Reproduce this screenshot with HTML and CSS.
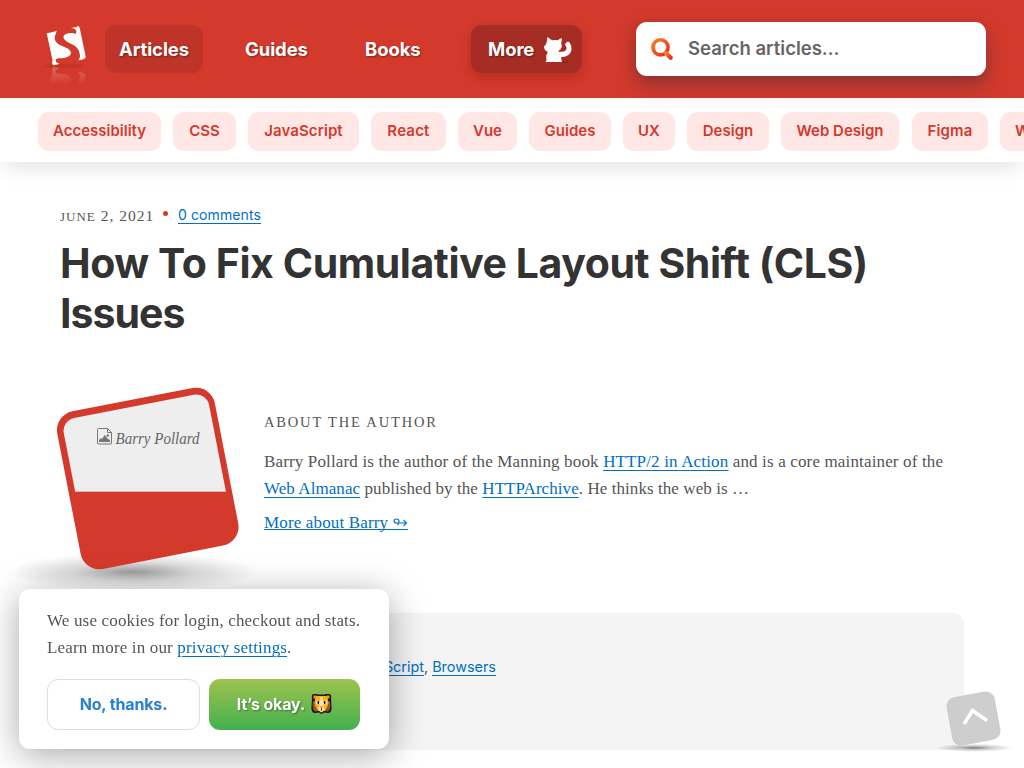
FILE: index.html
```html
<!DOCTYPE html>
<html lang="en">
<head>
<meta charset="utf-8">
<title>How To Fix Cumulative Layout Shift (CLS) Issues</title>
<link rel="stylesheet" href="styles.css">
</head>
<body>
<header class="header">
  <a class="logo" href="#">
    <svg width="46" height="64" viewBox="0 0 46 64">
      <defs>
        <linearGradient id="fade" x1="0" y1="1" x2="0" y2="0"><stop offset="0" stop-color="#fff" stop-opacity=".24"/><stop offset=".45" stop-color="#fff" stop-opacity="0"/></linearGradient>
        <path id="mark" d="M3.700 11.200Q9 10.500 13.700 8.700L12.700 12Q10 17 14 21C18 25 24 24.500 27 28.500C30 33 25 36.500 15.300 36.300Q11.500 37 13 40L16.500 42 10.500 43.300Q8.500 42 9.500 38ZM27.700 5.800Q33 6 35.300 4Q36.500 4.500 37 7.300L42.700 34.700Q43 37.500 35 38.200Q38 36 36.500 31C35 24 29 22.500 24.500 20C19.500 17 18.500 12.500 25.300 11.200Q30 10.300 32.700 12Q35.500 7 27.700 5.800Z"/>
      </defs>
      <ellipse cx="20" cy="44" rx="20" ry="2.500" fill="#a8291f" opacity=".3"/>
      <use href="#mark" fill="#fff"/>
      <use href="#mark" fill="url(#fade)" transform="translate(0 88) scale(1 -1)"/>
    </svg>
  </a>
  <nav class="menu">
    <a class="menu-link menu-articles" href="#"><span>Articles</span></a>
    <a class="menu-link menu-guides" href="#"><span>Guides</span></a>
    <a class="menu-link menu-books" href="#"><span>Books</span></a>
    <a class="menu-link menu-more" href="#"><span>More</span>
      <svg width="30" height="27" viewBox="0 0 30 27"><path fill="#fff" d="M4.500 1 9 4.300Q12 3.600 14.500 4.300L18.800 2 18.300 8Q20 12 15.500 15Q18.500 18 18.300 23L19 26H2.500L3.700 24Q2 20 5 16Q1 14.500 1 10.500 3.700 8.500 3.700 6Z"/><path d="M17.500 18.300Q24.500 19 26 13.500Q26.500 11 24.800 8.500" fill="none" stroke="#fff" stroke-width="5" stroke-linecap="round"/><path d="M19 26h7" stroke="#6e1d17" stroke-width=".6"/></svg>
    </a>
  </nav>
  <div class="search">
    <svg width="24" height="24" viewBox="0 0 24 24"><defs><linearGradient id="heat" x1="0" y1="0" x2="1" y2="1"><stop stop-color="#ff7b24"/><stop offset="1" stop-color="#e92c24"/></linearGradient></defs><g fill="none" stroke="url(#heat)"><circle cx="10.500" cy="10.300" r="7.600" stroke-width="3.600"/><path d="m16.200 16.200 4.500 4.500" stroke-width="4.200" stroke-linecap="round"/></g></svg>
    <span class="placeholder">Search articles…</span>
  </div>
</header>
<nav class="topics"><div class="chips">
  <a class="chip" href="#">Accessibility</a><a class="chip" href="#">CSS</a><a class="chip" href="#">JavaScript</a><a class="chip" href="#">React</a><a class="chip" href="#">Vue</a><a class="chip" href="#">Guides</a><a class="chip" href="#">UX</a><a class="chip" href="#">Design</a><a class="chip" href="#">Web Design</a><a class="chip" href="#">Figma</a><a class="chip" href="#">Wallpapers</a>
</div></nav>
<main class="article">
  <div class="meta"><time class="date"><small>JUNE</small> 2, 2021</time><i class="dot"></i><a class="comments" href="#">0 comments</a></div>
  <h1 class="title"><span class="title-first">How To Fix Cumulative Layout Shift (CLS)</span><br><span class="title-last">Issues</span></h1>
  <section class="author">
    <svg class="portrait" width="300" height="230" viewBox="0 370 300 230">
      <defs><radialGradient id="shade"><stop stop-color="#000" stop-opacity=".38"/><stop offset=".5" stop-color="#000" stop-opacity=".13"/><stop offset="1" stop-color="#000" stop-opacity="0"/></radialGradient><clipPath id="upper"><path d="M0 370h300v121.500H0z"/></clipPath></defs>
      <ellipse cx="133" cy="572" rx="125" ry="19" fill="url(#shade)"/>
      <rect x="67.500" y="398.200" width="160.500" height="160.500" rx="19" fill="#d33a2c" transform="rotate(-11 147.800 478.500)"/>
      <g clip-path="url(#upper)"><rect x="74" y="405" width="148" height="148" rx="13" fill="#eee" transform="rotate(-11 147.800 478.500)"/></g>
      <path d="M75 491.500h151" stroke="#ddd" stroke-width=".7" opacity=".6"/>
      <g fill="none" stroke="#777"><path d="M97.500 429.500q0-1 1-1h9l4 4v10.500q0 1-1 1h-12q-1 0-1-1z"/><path d="M107.500 428.500v4h4"/></g>
      <path d="M99 442v-2l2-2 1 1 2.500-4 3.500 4 2 1v2z" fill="#777"/><circle cx="107.800" cy="435.500" r="1.300" fill="#777"/>
      <text class="alt" x="115.500" y="444" textLength="84" lengthAdjust="spacingAndGlyphs">Barry Pollard</text>
    </svg>
    <div class="bio">
      <h2 class="about">ABOUT THE AUTHOR</h2>
      <p class="line line-one">Barry Pollard is the author of the Manning book <a href="#">HTTP/2 in Action</a> and is a core maintainer of the</p>
      <p class="line line-two"><a href="#">Web Almanac</a> published by the <a href="#">HTTPArchive</a>. He thinks the web is …</p>
      <p class="line line-more"><a href="#">More about Barry <svg width="15" height="10" viewBox="0 0 15 10"><path d="M13.500 5H4Q1 5 1 3T3.500 1 6 3.500 4.500 7M10.500 2l3 3-3 3" fill="none" stroke="currentColor" stroke-width="1.100"/></svg></a></p>
    </div>
  </section>
  <aside class="tags"><a class="tag-script" href="#">JavaScript</a><span>, </span><a class="tag-browsers" href="#">Browsers</a></aside>
</main>
<div class="cookies">
  <p class="cookie-text"><span class="cookie-first">We use cookies for login, checkout and stats.</span><br><span class="cookie-last">Learn more in our <a href="#">privacy settings</a>.</span></p>
  <div class="buttons">
    <button class="button decline"><span>No, thanks.</span></button>
    <button class="button accept"><span>It’s okay.</span>
      <svg width="21" height="20" viewBox="0 0 21 20"><path d="M3 0Q0 0 1 4L.5 13Q0 19 4 19L8 18.500 10.500 20 13 18.500 17 19Q21 19 20.500 13L20 4Q21 0 18 0 15-.5 14 .5H7Q5-.5 3 0Z" fill="#171717"/><path d="M2 7Q1 16 4 17.500L8 17 5 8ZM19 7Q20 16 17 17.500L13 17 16 8Z" fill="#93582b"/><path d="M4.500 2H16.500L17.500 9Q16 15 13 17H8Q5 15 3.500 9Z" fill="#fdaf15"/><path d="M2.500 1.500h3v3h-3zM15.500 1.500h3v3h-3z" fill="#f99817"/><path d="M9.500 3h2l1 8 1.500 5-3.500 2.500L7 16l1.500-5Z" fill="#ffe4a0"/><path d="M8.500 12.500h4l-2 2z" fill="#ef6b38"/><circle cx="7" cy="8.500" r="1.900" fill="#fff"/><circle cx="14" cy="8.500" r="1.900" fill="#fff"/><ellipse cx="7.300" cy="8.500" rx=".9" ry="1.700"/><ellipse cx="13.700" cy="8.500" rx=".9" ry="1.700"/><path d="M10.500 14.500v2" stroke="#171717"/></svg>
    </button>
  </div>
</div>
<a class="to-top" href="#">
  <svg width="90" height="70" viewBox="0 0 90 70"><defs><radialGradient id="floor"><stop stop-color="#000" stop-opacity=".5"/><stop offset=".5" stop-color="#000" stop-opacity=".18"/><stop offset="1" stop-color="#000" stop-opacity="0"/></radialGradient></defs><ellipse cx="44" cy="62.800" rx="38" ry="4" fill="url(#floor)"/><rect x="19" y="9" width="49" height="49" rx="9" fill="#c5c5c5" fill-opacity=".84" transform="rotate(-10.500 43.500 33.500)"/><path d="m34 39 8.500-13.500L57 35.500" fill="none" stroke="#fff" stroke-width="3.600"/></svg>
</a>
</body>
</html>
```
FILE: styles.css
```css
* { box-sizing: border-box; }
html, body { height: 100%; overflow: hidden; }
body { margin: 0; background: #fff; color: #555; font-family: "Liberation Serif", serif; }
a { color: #006fc6; text-decoration: none; }
p, h1, h2 { margin: 0; }
svg { display: block; flex: none; }
.header { position: relative; z-index: 1; display: flex; align-items: flex-start; height: 98px; background: #d33a2c; font-family: Inter, "Liberation Sans", sans-serif; }
.logo { padding: 22px 0 0 43px; width: 105px; }
.menu { display: flex; padding-top: 25px; width: 531px; }
.menu-link { display: flex; align-items: center; height: 48px; border-radius: 11px; color: #fff; font-weight: 700; font-size: 18.500px; white-space: nowrap; letter-spacing: -.1px; text-shadow: 1px 1px 2px rgba(0,0,0,.4); }
.menu-articles { width: 98px; padding-left: 14px; background: #be3428; }
.menu-guides { margin-left: 42px; width: 65px; }
.menu-books { margin-left: 55px; width: 58px; }
.menu-more { margin-left: 48px; width: 111px; padding-left: 17px; gap: 9px; background: #a52d23; box-shadow: 0 5px 12px rgba(100,10,5,.23); }
.search { display: flex; align-items: center; gap: 14px; width: 350px; height: 54px; margin-top: 22px; padding-left: 14px; border-radius: 11px; background: #fff; box-shadow: 0 10px 20px rgba(75,45,60,.38), 0 3px 8px rgba(75,45,60,.24); }
.placeholder { padding-bottom: 2px; color: #666; font-weight: 600; font-size: 18.500px; letter-spacing: 0; white-space: nowrap; }
.topics { height: 64px; box-shadow: 0 12px 20px -5px rgba(0,0,0,.1); }
.chips { display: flex; gap: 12px; padding: 14px 0 0 38px; overflow: hidden; white-space: nowrap; }
.chip { display: flex; flex: none; justify-content: center; height: 39px; border-radius: 11px; background: #ffe7e6; color: #d33a2c; font: 600 15px/37px Inter, "Liberation Sans", sans-serif; }
.chip:nth-child(1) { width: 123px; }
.chip:nth-child(2) { width: 63px; }
.chip:nth-child(3) { width: 111px; letter-spacing: .1px; }
.chip:nth-child(4) { width: 75px; letter-spacing: .2px; }
.chip:nth-child(5) { width: 59px; }
.chip:nth-child(6) { width: 82px; }
.chip:nth-child(7) { width: 52px; }
.chip:nth-child(8) { width: 82px; }
.chip:nth-child(9) { width: 118px; }
.chip:nth-child(10) { width: 76px; margin-left: 1px; letter-spacing: .2px; }
.chip:nth-child(11) { width: 116px; padding-left: 15px; justify-content: flex-start; }
.article { padding: 44px 60px 0; }
.meta { display: flex; align-items: center; height: 20px; white-space: nowrap; }
.date { width: 94px; font-size: 15.500px; letter-spacing: 1px; }
.date small { font-size: 13px; letter-spacing: 1px; }
.dot { width: 5px; height: 5px; margin: 0 11px 5px 9px; border-radius: 50%; background: #d33a2c; }
.comments { margin: -1px 0 0 -1px; border-bottom: 1px solid; font: 400 14px/16px Inter, "Liberation Sans", sans-serif; letter-spacing: .1px; }
.title { margin-top: 12px; color: #333; font: 700 41px/50px Inter, "Liberation Sans", sans-serif; white-space: nowrap; letter-spacing: -.43px; }
.title-last { letter-spacing: -1px; }
.author { display: flex; height: 275px; margin-top: 32px; }
.portrait { margin-left: -60px; }
.alt { fill: #666; font: italic 17px "Liberation Serif", serif; }
.bio { width: 700px; margin-left: -36px; padding-top: 42px; }
.about { font-weight: 400; font-size: 14.500px; line-height: 20px; letter-spacing: 1.830px; white-space: nowrap; }
.line { font-size: 17px; line-height: 27px; white-space: nowrap; letter-spacing: .15px; }
.line-one { margin-top: 16px; }
.line-two { letter-spacing: .07px; }
.line-more { margin-top: 7px; }
.line a, .cookie-text a { text-decoration: underline; text-decoration-thickness: 1px; text-underline-offset: 3px; }
.line svg { display: inline-block; }
.line .line-more a, .line-more a { display: inline-block; height: 21px; line-height: 27px; border-bottom: 0; box-shadow: inset 0 -1px #006fc6; text-decoration: none; }
.tags { display: flex; height: 137px; margin-top: -32px; padding: 44px 0 0 288px; border-radius: 11px; background: #f4f4f4; font: 400 14.400px/20px Inter, "Liberation Sans", sans-serif; white-space: pre; }
.tags a { height: 19px; border-bottom: 1px solid; }
.tag-script { display: flex; justify-content: flex-end; width: 76px; }
.cookies { position: fixed; z-index: 2; left: 19px; top: 589px; width: 370px; height: 160px; padding: 18px 28px; border-radius: 11px; background: #fff; box-shadow: 0 6px 36px rgba(0,0,0,.35); }
.cookie-text { font-size: 17px; line-height: 27px; white-space: nowrap; color: #555; letter-spacing: .16px; }
.buttons { display: flex; gap: 9px; margin-top: 18px; }
.button { display: flex; align-items: center; justify-content: center; height: 51px; border-radius: 11px; padding: 0 0 2px; font: 700 16px Inter, "Liberation Sans", sans-serif; letter-spacing: -.15px; }
.decline { width: 153px; border: 1px solid #ddd; background: #fff; color: #2780d1; }
.accept { width: 151px; gap: 6px; border: 0; background: linear-gradient(#9ec34e, #43b04f); color: #fff; text-shadow: 1px 1px 2px rgba(0,0,0,.4); }
.to-top { position: fixed; left: 930px; top: 685px; }
```
